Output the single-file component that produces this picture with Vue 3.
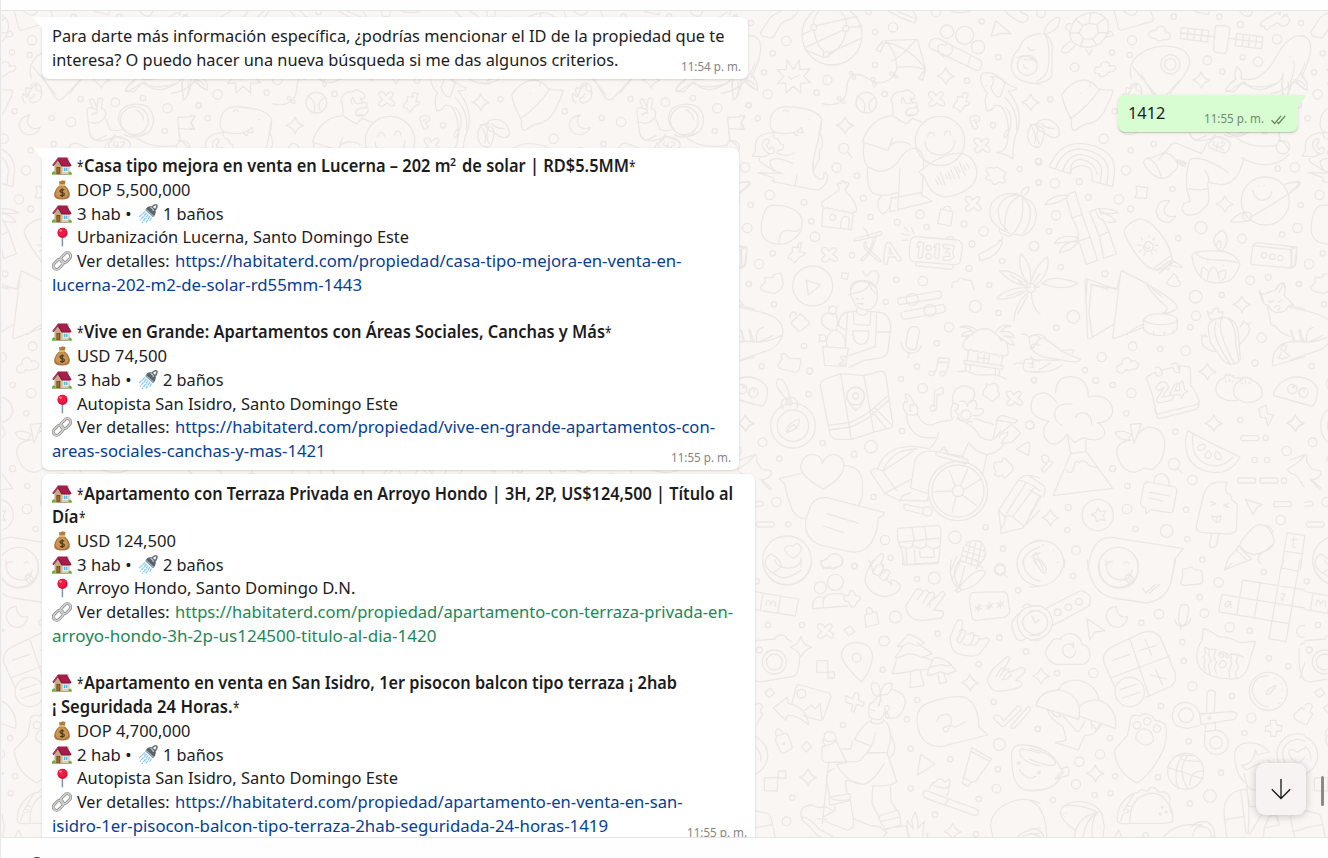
<script setup>
import { h } from 'vue'

const T = (s, w, o = {}) => ({ s, w, ...o })
const star = { s: '*', w: 6.5 }
const bold = (s, w) => ({ s, w, bold: true })
const icon = (name, gap = 5) => ({ icon: name, gap })

const listing = (title, price, rooms, baths, place, placeW, link, blank) => [
  ...title,
  [icon('bag'), T(price[0], price[1])],
  [icon('house'), T(rooms + ' hab •', 54.5), { ...icon('shower', 5), lead: 6 }, T(baths + ' baños', 60.5)],
  [icon('pin'), T(place, placeW)],
  [icon('chain'), T('Ver detalles:', 92.5), T(link[0], link[1], { link: link[4] || 'blue', lead: 5 })],
  [T(link[2], link[3], { link: link[4] || 'blue' })],
  ...(blank ? [[]] : [])
]

const bubbles = [
  {
    cls: 'first', time: '11:54 p. m.',
    lines: [
      [T('Para darte más información específica, ¿podrías mencionar el ID de la propiedad que te', 672.5)],
      [T('interesa? O puedo hacer una nueva búsqueda si me das algunos criterios.', 566.5)]
    ]
  },
  {
    cls: 'second', time: '11:55 p. m.',
    lines: [
      ...listing(
        [[icon('house'), star, bold('Casa tipo mejora en venta en Lucerna – 202 m', 366.5), { s: '2', w: 6, bold: true, sup: true }, { ...bold('de solar | RD$5.5MM', 167), lead: 5.5 }, star]],
        ['DOP 5,500,000', 113.5], 3, 1, 'Urbanización Lucerna, Santo Domingo Este', 332,
        ['https://habitaterd.com/propiedad/casa-tipo-mejora-en-venta-en-', 506.5, 'lucerna-202-m2-de-solar-rd55mm-1443', 310], true),
      ...listing(
        [[icon('house'), star, bold('Vive en Grande: Apartamentos con Áreas Sociales, Canchas y Más', 521), star]],
        ['USD 74,500', 90], 3, 2, 'Autopista San Isidro, Santo Domingo Este', 321,
        ['https://habitaterd.com/propiedad/vive-en-grande-apartamentos-con-', 540, 'areas-sociales-canchas-y-mas-1421', 273.5])
    ]
  },
  {
    cls: 'third', time: '11:55 p. m.',
    lines: [
      ...listing(
        [[icon('house'), star, bold('Apartamento con Terraza Privada en Arroyo Hondo | 3H, 2P, US$124,500 | Título al', 649)],
          [bold('Día', 26.5), star]],
        ['USD 124,500', 99], 3, 2, 'Arroyo Hondo, Santo Domingo D.N.', 278.5,
        ['https://habitaterd.com/propiedad/apartamento-con-terraza-privada-en-', 558, 'arroyo-hondo-3h-2p-us124500-titulo-al-dia-1420', 384.5, 'green'], true),
      ...listing(
        [[icon('house'), star, bold('Apartamento en venta en San Isidro, 1er pisocon balcon tipo terraza ¡ 2hab', 593)],
          [bold('¡ Seguridada 24 Horas.', 180.5), star]],
        ['DOP 4,700,000', 113.5], 2, 1, 'Autopista San Isidro, Santo Domingo Este', 321,
        ['https://habitaterd.com/propiedad/apartamento-en-venta-en-san-', 507.5, 'isidro-1er-pisocon-balcon-tipo-terraza-2hab-seguridada-24-horas-1419', 556])
    ]
  }
]

const FitText = ({ seg }) =>
  h('svg', { width: seg.w, height: 23, overflow: 'visible', style: { display: 'block', flex: 'none', marginLeft: (seg.link ? 0 : seg.lead || 0) + 'px' } }, [
    h('text', {
      y: seg.sup ? 10.5 : 17, textLength: seg.w, lengthAdjust: 'spacingAndGlyphs', fill: 'currentColor',
      'font-weight': seg.bold ? 600 : 400, 'font-size': seg.sup ? 11 : undefined
    }, seg.s)
  ])

/* Wallpaper doodles, drawn on sheets at three units per pixel */
const sheets = [
  {
    x: 1100, y: 0,
    dots: [242,297,8,346,307,13,429,294,8,502,325,14,596,316,8,155,354,8,213,366,14,494,393,8,403,362,42],
    sparks: [],
    crosses: [],
    paths: [
      'M125 225L164 291Q175 306 189 295L240 240M376 270Q390 250 403 244M376 270Q392 276 403 263L432 246Q470 290 531 249M545 248L550 300Q570 290 564 246M582 240Q612 240 622 272Q602 262 590 249M77 309Q62 300 70 280L82 292Q91 260 112 250Q100 275 122 273Q133 300 99 309Q84 307 91 293Q101 296 103 282M90 345Q57 350 58 379Q65 405 91 404Q115 400 121 382Q91 394 82 367Q80 354 90 345',
      'M263 350Q256 323 270 322L280 326L270 305Q271 294 280 298L291 323L294 300Q300 289 308 298L304 326Q318 325 317 345Q310 366 285 370L265 366ZM280 326Q296 323 291 340Q280 336 276 347M264 366L269 399Q270 416 291 421L318 407M317 356L330 388Q348 395 365 389M375 391Q340 362 367 326Q400 303 441 319Q474 350 452 390Q425 418 389 403M408 329Q430 340 431 360M334 425L346 409Q380 410 391 430M533 352Q560 354 585 346L572 370L584 389L539 386M533 352L539 425'
    ]
  },
  {
    x: 740, y: 0,
    dots: [139,123,14,98,160,8,72,217,8,83,283,14,26,316,8,53,355,8,230,278,8,262,240,14,405,96,8,459,82,14,386,36,8,405,195,8,434,282,8,588,38,13,725,64,8,775,172,8,681,242,8,759,376,8,839,507,8,15,502,14,89,585,14,32,615,8,192,607,9,290,503,14,351,527,8,370,595,9,214,664,8,225,710,14,22,684,14,98,760,8,57,792,14,26,852,8,392,651,8,472,667,9,540,643,13,560,681,8,672,672,9,731,694,14,696,732,9,882,738,14,336,766,8,469,839,8,549,843,14,687,805,9,748,855,8,786,783,8,896,485,10,896,548,8,33,69,8,276,105,90,221,82,9,318,85,9,259,163,9,379,308,31,621,95,20,674,106,27,714,141,20,600,423,74,311,445,15,278,652,9,218,858,60,566,744,8,566,769,8,872,863,14,862,196,30],
    sparks: [315,376,617,228,872,307],
    crosses: [589,297,726,436,699,611,268,764],
    paths: [
      'M122 34L107 42Q92 48 84 63L62 97Q62 105 70 109L92 114Q100 113 105 103L121 75Q127 66 139 62Q163 55 174 34',
      'M188 104L212 92M230 77L352 49M194 143L308 91M327 82L366 78M199 151L250 172M269 158L364 115M236 34Q215 60 222 73M222 91Q226 129 252 155M300 34Q322 50 319 76M317 94Q312 140 267 164',
      'M160 208L178 180L180 209L210 207L191 229L212 248L181 250L182 279L160 259L138 279L137 249L112 251L131 229L111 209L139 209L141 180ZM145 229L153 237L178 225',
      'M435 122L525 118Q531 117 534 124L557 208Q515 195 470 202Q470 153 435 122ZM529 119Q475 178 455 182M435 125Q515 145 556 208M428 123L408 149L421 156L433 129L453 130M557 208L534 235L548 241ZM471 202Q465 230 446 240Q420 254 401 244L372 229Q349 217 334 228Q320 240 320 270Q315 296 303 303Q280 321 247 311M330 215Q343 214 337 224Q352 230 344 239Q334 235 337 224Q323 222 330 215M396 233Q411 232 403 244Q413 258 402 260Q394 252 403 244Q387 245 396 233M450 216Q463 213 461 225Q478 225 474 233Q463 235 461 225Q444 227 450 216M292 292Q304 287 302 299Q320 302 314 311Q302 310 302 299Q288 302 292 292',
      'M447 34Q491 59 526 69Q533 48 519 34M472 34L528 57M635 34Q660 42 690 34M796 34Q820 60 848 67Q868 65 863 47L840 34M753 109L767 62L813 101L785 100ZM568 132Q573 112 596 116L720 180Q731 189 720 208Q714 214 702 208L571 145Q566 140 568 132M691 170L683 197M611 171Q591 154 593 139Q602 128 613 137Q621 128 631 132Q653 158 611 171',
      'M900 101Q850 105 837 147Q811 170 815 206Q823 250 900 252M832 173Q850 163 864 169Q872 176 887 184M852 178L861 179M867 180Q876 181 879 173M851 195Q851 207 864 205M864 142Q873 157 884 148',
      'M740 333Q730 291 743 281Q710 238 728 220Q760 210 796 247Q817 263 829 263Q829 274 804 272Q850 331 834 389Q817 420 819 477Q790 458 770 458Q794 456 801 432Q814 374 789 324Q775 311 763 317Q762 330 740 333ZM752 262Q768 239 754 230Q783 231 795 250L781 290Q767 297 752 262M795 292Q837 336 829 389M797 323Q829 358 797 413Q785 412 801 389M739 257L740 257',
      'M90 371Q94 313 152 321Q230 326 245 357Q245 382 240 398Q254 432 243 445Q234 454 239 462L238 478L230 491L220 513Q210 505 235 420L243 366M130 334Q140 326 145 336M207 358L209 358M90 371Q91 394 108 397Q162 409 185 382L189 399L174 396Q172 416 162 400M101 397Q38 401 47 451L37 469L57 469Q79 473 91 461M101 397Q97 418 115 417Q117 433 130 434L129 449Q110 448 111 460L136 466Q152 466 164 458M80 416Q63 425 69 442Q82 466 101 459L103 446L94 441L87 449L79 434L86 428Q89 415 80 416M59 474Q53 483 70 492L103 513L127 520L54 518L90 530Q110 534 97 544L162 558Q170 547 170 525M163 557Q211 569 235 569Q263 557 263 527Q258 513 252 519Q253 545 235 535Q215 526 221 490M106 513Q89 501 91 482Q108 467 158 490',
      'M351 288Q382 301 372 337M407 292Q378 304 391 332M324 457L335 471M458 347Q462 318 453 302Q457 274 487 275Q500 264 515 277Q529 286 522 297L510 295L519 307L499 312L488 292Q481 300 486 312M517 309Q534 305 532 313L528 320Q542 328 526 345Q500 354 497 340Q497 323 528 324M497 335Q495 343 503 345L521 344M461 348Q483 365 500 371L517 355L545 366M458 347Q419 349 393 378Q376 398 367 426L444 451L458 413M372 427Q365 490 389 503Q434 530 472 488Q502 435 534 448Q554 460 551 508M445 449Q450 428 473 426Q500 423 511 436M383 503Q379 569 402 581Q437 593 472 577M480 504L473 631M455 589Q449 620 450 635L575 604Q558 590 544 586L545 577L454 595M549 525L546 577M424 589Q412 594 414 622Q420 640 430 641Q446 632 450 617',
      'M563 410Q567 395 574 397Q583 398 583 409M613 405Q616 392 625 393Q633 395 632 405M555 425Q557 463 603 465Q643 460 645 421M537 516Q610 454 669 461Q707 472 711 521Q706 570 636 588Q600 598 570 567L554 534ZM552 482Q565 484 574 493M587 540L594 554M592 528L605 554M601 518L616 556M616 523L623 535M624 516L633 536M632 509L645 536M643 501L659 535M652 502L659 516M659 489L675 526M671 497L679 512M679 491L688 505',
      'M691 351Q706 343 717 350Q724 365 706 367L714 380Q711 391 701 386L689 357ZM708 359L700 362M684 281L678 304L689 307Q688 316 676 317L660 337Q657 327 639 321Q641 311 652 304L652 289L669 292Q664 280 672 278ZM185 729L178 756L196 759Q194 767 180 770L164 789Q158 778 143 774Q145 764 157 757L157 741L176 743Q171 734 177 729Z',
      'M298 570Q297 556 291 553Q294 545 303 551Q305 538 311 542L313 551Q322 543 326 550Q324 560 315 567L318 577Q340 590 350 626Q350 639 339 637Q330 645 325 634Q314 639 309 631Q296 637 291 628Q282 634 277 624Q267 631 263 622Q255 629 249 619Q239 614 250 603ZM249 624L245 679L334 689L340 640M302 683Q301 651 315 649Q329 650 328 661L325 687',
      'M63 690Q67 618 96 616Q168 613 186 656Q187 689 177 702Q151 733 117 733Q68 731 63 690M116 732Q120 684 148 692Q172 698 178 688M341 717L423 694Q429 702 420 706L342 724ZM370 685L378 691L386 711M410 705Q395 760 369 782Q358 784 369 771Q394 753 401 711M378 724L379 740L421 779Q426 787 414 783L375 747Q367 729 378 724M434 792Q426 783 438 732Q445 722 453 731L484 779Q482 786 472 782L464 770L446 772L441 794ZM449 743L447 761L457 762Z',
      'M508 766Q508 721 514 716Q523 708 537 711L654 720Q669 726 667 747L660 787Q651 796 642 794L517 784Q508 780 508 766M617 715Q635 701 644 719M527 785L528 797L635 808L640 798M486 702L508 706M494 682L504 694M514 682L522 700M486 721L502 720M531 734L535 726L551 728L547 772Q534 778 534 769L539 739L531 742ZM584 734L599 731L596 776Q583 777 583 768L588 741L582 743ZM609 734Q641 732 643 740L638 757L642 772Q630 783 613 782Q604 774 614 769L629 769L628 759L616 756L630 746L611 744Z',
      'M602 627L639 636L632 678L593 670ZM609 628Q612 618 625 619Q635 621 631 634M739 513Q738 501 749 503Q755 501 761 506Q768 497 777 505L792 514Q799 518 795 527Q785 529 795 538Q797 547 788 550Q777 541 768 553Q756 555 756 543Q748 537 739 540Q734 529 747 526Q745 518 739 513',
      'M826 581Q777 577 755 609Q739 653 770 677Q795 704 850 706Q888 690 889 640Q884 604 859 597M834 584Q783 587 774 630Q776 676 803 691M842 586Q789 610 795 691M847 591Q856 660 821 698M856 599Q888 638 852 698M821 587Q835 582 846 589Q855 594 858 602M822 586Q820 582 828 581L847 588M778 686Q776 699 789 702Q809 712 815 706M844 579Q846 565 867 560Q869 580 848 589M788 711Q786 730 718 762L719 782Q770 773 785 733M775 723Q783 715 787 729',
      'M864 851Q828 800 844 761Q876 797 872 844M854 855Q820 856 779 813Q820 807 862 850M810 825L848 847M900 820L882 846M900 859L886 863M199 840L241 854Q230 867 205 885ZM61 861Q80 848 75 832L93 833Q105 831 99 824L123 819L130 854Q125 870 105 880Q60 875 61 861M306 818L325 820L322 839L304 834ZM369 815L380 828Q409 796 417 828L410 854M332 870Q350 823 410 862M636 864Q633 843 651 844Q661 827 671 838L693 842L703 870M0 741L20 742L15 792Q10 802 0 800M5 748L5 790M0 345L15 349L4 367L14 388L0 384M0 548L29 544L24 556L0 577M31 107Q74 110 57 176Q45 210 34 231Q54 239 52 271Q34 262 20 248Q5 240 0 270M897 370Q863 370 863 410Q871 446 893 439M877 384Q893 415 883 429'
    ]
  },
  {
    x: 1030, y: 0,
    dots: [33,40,13,431,50,8,568,50,8,631,74,9,306,121,14,246,157,8,299,165,8,134,202,13,532,181,13,577,215,8,638,172,8,684,185,14,741,118,14,61,298,8,221,416,14,254,334,8,371,432,8,302,451,8,25,484,8,26,548,8,75,550,14,148,545,9,288,511,14,427,567,8,175,592,9,267,598,14,302,627,9,78,646,14,57,694,8,12,738,14,445,715,8,513,683,18,636,716,13,756,704,8,743,506,8,92,802,8,225,821,9,661,841,13,715,832,9,702,766,8,727,770,8,751,774,8,421,193,29,421,193,17,706,603,72,651,650,13,759,442,20],
    sparks: [513,240,584,612],
    crosses: [],
    paths: [
      'M123 84Q136 42 189 38Q218 39 233 63Q243 99 213 128Q171 156 128 127Q115 107 123 84M178 70L200 74L206 97L188 117L160 116L147 98L158 77ZM178 70L182 40M200 74L225 54M206 97L236 99M188 117L201 136M160 116L151 138M147 98L120 100M158 77L136 57M122 71Q104 70 108 85L121 98M121 124Q97 137 94 154Q101 164 117 155L135 137M234 92Q254 97 248 108L225 112M168 148L177 165L187 149M43 103Q41 74 79 52Q97 49 83 80Q70 98 43 103M38 100Q59 106 67 136L65 227Q54 250 0 250M47 105Q60 139 56 184Q56 230 22 242',
      'M253 34L266 85Q268 93 276 90L364 65Q373 61 370 53L361 34M282 34Q310 57 322 34M493 34L536 44L539 34M630 34Q643 53 661 47L668 34M751 34L750 45Q744 33 733 42L697 64Q687 73 694 79L704 78Q702 91 715 88L722 80L744 67Q760 89 776 69Q785 50 760 44M755 53L773 41M359 108Q352 97 365 91Q379 96 382 83Q397 73 405 84L405 96Q420 94 421 107Q421 122 400 119L390 123Q378 121 377 115Q365 119 359 108M196 220Q188 208 202 200Q212 203 213 192Q221 181 234 187Q241 192 237 200Q254 192 258 203Q253 218 237 216Q218 237 207 227Q218 221 196 220',
      'M454 83L536 91L533 126L451 116ZM474 85L471 119M495 87L491 121M516 89L512 123M453 99L534 108M536 108L555 110M597 115L618 117M620 101L699 110L695 146L616 137ZM640 104L636 139M659 106L655 142M680 108L676 144M618 118L697 127M563 76L589 78Q600 80 599 90L590 154Q586 161 578 160L557 157Q550 154 551 145L555 85Q556 77 563 76',
      'M300 213Q301 178 338 157Q385 128 446 144Q481 158 479 190Q468 226 436 260L420 280M308 200L378 285M300 213L304 236M294 286Q282 277 290 262L299 266Q305 246 321 250Q334 252 336 280M160 240Q125 242 96 283Q95 304 125 361Q121 393 136 391Q159 372 184 369Q216 358 232 314Q248 288 248 270Q215 272 203 264Q189 242 160 240M151 280L152 280M210 266Q177 319 121 356M182 249Q177 253 180 258M19 375Q26 352 60 360Q90 373 88 405Q72 424 40 396Q17 390 19 375M35 370Q43 385 72 386M0 374Q45 376 42 401Q36 448 16 443M26 383Q14 411 28 431',
      'M587 274Q594 247 618 238Q610 223 621 200Q640 216 632 236Q651 241 676 236Q713 219 740 168Q775 102 820 107Q849 117 838 158Q820 209 801 237Q766 276 724 280M587 274L612 275L636 249Q680 271 739 251Q758 238 760 220M780 171L781 171M790 184Q799 200 783 242L774 285M759 236Q753 271 760 286M814 221Q832 237 832 270Q815 263 800 247',
      'M58 501Q85 430 151 430Q252 440 254 510L248 560L186 543Q192 494 153 497Q121 503 120 521ZM77 506Q97 446 153 447Q231 460 235 511L231 554M98 513Q115 463 154 463Q215 475 215 514L211 550M123 520Q118 479 154 478Q192 485 203 523',
      'M45 613Q66 583 117 586Q84 616 45 613M116 582L135 574L156 643L126 654L106 583M126 654Q150 690 144 724L180 711L156 643M147 725L169 793L203 781L180 711M74 730Q86 702 140 711L144 721Q100 725 87 758M144 724Q104 725 74 730M87 758Q120 755 147 726M178 636L207 624L213 643M180 640L208 709L236 694L217 656M208 709L221 775L259 762L236 694M207 628Q235 621 265 638Q230 644 216 636ZM216 640Q246 644 258 666Q224 671 206 653L197 632',
      'M479 399Q487 425 515 422Q545 421 556 404M583 404Q614 421 643 400M546 415Q551 409 562 411L593 422Q603 429 600 437L594 452Q586 462 578 458L541 445Q533 437 536 431ZM554 425Q546 437 555 437L566 440M564 427L560 447M572 427Q589 423 581 435L569 444L581 450M439 480Q466 483 468 493L444 485L458 499M531 429L515 461L438 429Q420 431 418 442L384 480M340 487Q347 469 365 474L399 459Q417 454 438 482Q452 500 428 518Q404 544 381 531Q351 515 340 487M347 475Q374 473 395 531M440 483L466 500M525 511Q543 538 533 552L537 597Q536 619 516 628Q509 647 471 645Q447 631 463 609L481 604L470 567Q466 518 480 478Q520 464 595 518M470 565Q510 574 534 565M534 545Q620 580 642 472M621 415Q665 448 740 436M634 474Q672 493 700 494Q748 495 776 464M744 421Q762 420 777 449M748 398L750 418',
      'M318 558L353 563L349 596L315 592L322 577ZM419 602Q385 596 378 634Q384 668 415 667Q431 661 437 648Q401 657 403 624ZM645 635Q610 649 601 666Q624 670 655 662M662 651Q811 566 811 550Q801 541 764 553M669 571Q670 592 693 601Q722 600 725 575M686 559L687 559M702 556L703 556M282 696Q286 672 323 658Q346 655 369 676Q420 725 427 781Q418 801 383 811Q350 809 319 764Q289 721 282 696M374 803L422 767M380 810L428 778M388 819L433 784M427 781L457 799L456 803L420 796M405 805Q420 815 418 804M360 742Q355 750 345 741Q343 724 357 724Q378 735 365 751Q344 762 339 737M357 706L357 712M374 714L369 720M385 736L376 736M380 754L373 750M366 763L365 757M342 766L345 759M327 755L335 750M323 735L332 736M333 713L338 720',
      'M486 768Q486 750 564 753Q617 756 630 793Q617 834 593 844Q555 854 526 842Q490 817 486 768M498 758Q511 781 560 780Q610 782 622 788M573 755Q552 739 552 719Q556 700 577 691Q591 700 592 722Q588 741 573 755M560 738Q557 731 568 721Q579 732 569 747M514 832Q512 807 519 801Q533 808 538 822M532 838Q536 808 550 800Q568 815 568 841M563 823Q569 810 587 811Q590 832 574 842M531 784L532 784M557 779L558 779M580 796L581 796M662 788L668 741Q670 730 683 728L798 741Q803 745 797 793Q792 804 784 804L666 794ZM668 737L782 749L802 741M782 749L784 801',
      'M0 860Q10 800 53 770Q63 820 12 862M36 851Q67 820 144 850Q110 875 36 851M166 835L240 861L260 868L274 812L350 850L395 890M181 852L235 868M171 838L169 885M408 850L430 821Q445 830 443 840Q460 850 445 858Q425 864 408 850M739 870Q747 850 759 848L767 870'
    ]
  },
  {
    x: 740, y: 280,
    dots: [102,73,8,192,198,8,65,259,8,209,273,9,206,343,8,40,338,14,68,487,13,118,536,8,248,489,8,343,523,9,393,500,19,109,666,14,145,733,8,400,651,8,437,66,8,627,142,14,590,190,8,531,260,8,483,297,8,548,325,14,486,453,8,706,79,18,776,99,8,882,300,8,737,742,8,645,772,19,789,806,8,435,780,14,452,834,8,343,858,8,159,437,67,159,437,47,147,367,9,347,348,27,347,348,9,654,633,89,654,633,78,654,633,17,563,694,14,517,58,18,570,91,18,678,405,15,141,841,73,780,866,16,278,91,12,248,174,10,27,12,8],
    sparks: [16,429],
    crosses: [823,355],
    paths: [
      'M0 82Q85 99 107 114Q130 133 129 159Q122 195 88 210L0 240M0 184L60 186Q95 182 124 167M50 184Q44 148 70 142M98 167Q80 177 60 184M27 149L34 184M5 152L13 183M0 293Q62 285 82 325Q84 364 67 379L0 361M0 540L38 526Q52 518 50 534L50 545L65 567L87 571Q98 573 92 584Q85 597 65 600L93 623Q96 628 89 629L60 597M45 667Q70 660 70 672Q70 680 45 679M53 726L98 726Q104 730 104 734Q102 741 96 741L54 741Q48 738 49 732Z',
      'M126 236L123 223Q133 218 139 224Q141 232 153 235L178 236Q186 242 181 251L177 270Q172 279 162 276L124 267Q111 262 117 251ZM151 113Q149 97 159 96Q168 97 170 105M181 102L207 125Q211 129 203 136L182 153Q175 155 170 148L155 133Q153 127 161 120ZM147 353Q125 355 124 371L129 385M147 353Q165 349 173 369L171 384M147 368L119 333Q105 315 112 300Q122 292 131 304Q142 319 147 340L151 365M178 417Q154 425 142 441Q139 449 141 458Q164 451 175 437ZM142 456L153 438L164 434L171 445',
      'M334 50Q324 10 350 4Q400 -9 412 34Q416 75 391 88Q369 93 347 77L334 50M326 44L337 41Q384 33 387 10Q396 36 411 41M348 56L356 57M351 71L369 70L366 74M364 57L371 55M350 86L350 97Q366 114 381 100L381 88M350 93L324 96Q298 98 295 137L317 150M381 94L410 96Q449 98 452 140L444 212Q440 230 420 234L370 242L327 263M410 96L406 200L312 232M408 156L453 156M323 97L316 197M340 98L342 133L390 136L392 99M338 152L386 153Q389 190 364 193Q337 190 338 152M317 230Q297 225 303 235L312 240L297 252Q314 259 311 248M248 200L325 205Q318 244 318 259L254 256ZM260 199Q258 155 285 150Q317 158 317 204M272 150Q238 137 246 112Q258 91 289 105Q296 121 289 150M271 84L267 78M278 80L277 76M288 84L293 79M242 166L237 164M240 182L235 186',
      'M242 323Q237 306 256 297L302 281L372 287L417 274Q433 271 438 290L458 431Q459 442 448 445L407 455L334 478L286 478Q272 473 269 458ZM302 281L334 478M372 287L401 455M265 436L328 428Q365 412 387 396L444 347M267 450L332 441Q372 423 393 407L447 360M394 391L438 444M405 384L453 433M347 392Q320 364 320 349Q322 324 347 322Q373 325 373 350Q372 370 347 392',
      'M474 55L595 33Q606 33 604 47Q603 55 592 56L480 74Q471 72 474 55M484 98Q480 110 492 118L608 98Q617 95 616 83L609 73L492 95M517 140Q538 137 538 154L529 204Q520 214 506 206Q496 199 498 188L504 154Q507 143 517 140M483 184Q486 215 512 220Q537 219 544 196M508 222L504 235M587 275L596 234L629 235L619 276M594 246L625 247M583 333L582 380M583 333L608 321L610 339L594 346M592 340L589 384Q587 392 577 394Q567 391 570 381Q577 374 588 376M567 283Q565 272 578 275Q590 279 580 286Q567 288 567 283M600 284Q599 273 612 275Q621 281 612 287Q603 290 600 284',
      'M669 198Q663 184 710 153Q740 138 757 154Q775 171 795 183Q806 192 804 223Q799 231 785 226Q774 231 768 222Q756 226 749 219Q738 223 732 215Q719 220 711 212Q699 217 693 208Q675 216 669 198M685 211L682 241M672 241L789 257L787 268L674 252ZM789 228L783 257M715 221L712 244M748 225L746 249M733 222L731 248M716 234L748 236M677 257L677 272M690 258L692 270M766 267L766 282M779 267L778 284M654 275L680 273L706 284Q725 286 751 284Q775 284 798 297M712 152Q683 131 660 141Q685 141 696 153M700 155Q664 151 666 170Q682 165 694 165M696 165Q678 168 677 180M768 157Q779 130 813 138Q789 141 782 155Q817 151 822 173Q810 168 790 168Q817 173 822 197Q796 188 787 175M777 170Q786 190 787 178',
      'M770 55Q800 21 870 23M775 57Q820 60 862 30M822 122Q825 69 866 36M874 38Q875 80 900 103M801 48L849 33M833 101L863 47M836 2Q843 14 862 20M845 163Q860 160 869 176Q866 199 880 205L884 190Q892 199 900 194M869 172Q892 157 900 176M822 253Q835 245 853 252Q849 238 863 237Q877 236 900 244M852 252Q844 266 860 275L900 276M865 250L875 252L882 247',
      'M501 402Q483 381 494 366L503 367Q490 339 501 341Q510 344 520 367Q538 380 532 401Q520 410 501 402M507 377Q520 369 522 378M512 378Q507 397 514 393M500 405Q500 447 539 469Q558 475 585 473M533 405Q550 441 580 434Q594 423 634 421M596 457Q590 487 567 508M637 417Q627 394 639 370Q633 338 653 324Q675 309 700 328Q710 345 694 368M641 371Q660 370 654 386L644 392L657 405L651 418M659 364Q682 359 682 379Q687 358 706 362Q715 373 706 387Q733 381 730 397Q718 413 698 405M655 414Q670 432 697 424M705 415Q737 427 752 430L760 434M680 430Q703 440 718 467Q730 482 756 480Q776 467 782 450M686 488Q703 515 740 524Q773 520 794 490M686 488L666 530M741 524L727 586M760 472L774 412M768 420L825 430L832 420L788 407Q779 406 776 414M815 433L842 459L815 487L783 490L796 471Q805 467 803 456Q780 463 777 472M812 435L782 460',
      'M390 573Q403 563 413 567Q421 540 442 522Q487 487 563 506M429 572Q446 530 480 516Q500 508 530 507M429 573L520 513M391 575L434 640L513 598M413 567L428 573L470 632M512 622L525 540Q539 510 586 514L670 530M512 624L562 640M434 640L474 660Q492 661 562 663L565 650M480 664L485 649L512 638M494 673Q488 682 497 690L551 703M493 673L550 684M590 514Q585 522 590 527L676 551Q688 549 684 539L597 516M600 514L606 507L623 514L622 520M604 508L613 500L620 512M637 633L583 635M646 617L628 572M662 616L683 566M671 629L724 596M667 645L709 676M648 650L636 698',
      'M250 627Q180 588 182 558Q194 512 234 528Q246 535 247 551Q255 525 282 523Q315 530 311 562Q308 594 250 627M187 579L118 595L135 614Q140 650 158 691Q172 715 196 716M310 556Q371 559 367 620Q369 655 356 674M208 688Q218 650 260 653L433 697Q437 701 415 715Q410 780 376 807Q350 822 320 813L240 795Q185 772 200 710ZM259 700L356 730M250 738L311 758M93 822Q130 843 123 862L97 880Q72 860 76 841Q80 829 93 822M158 835Q127 813 136 803Q148 792 157 799Q173 781 184 804Q183 824 158 835M183 835L183 861M100 878Q130 912 183 870',
      'M829 507L862 487Q870 487 869 500L865 526ZM870 421L881 429L882 441L871 449L858 442L856 430ZM762 548L787 545Q785 530 797 537L817 558Q823 566 815 575L793 595L787 585Q777 593 763 584Q773 574 763 567Q760 557 762 548M741 311L750 317Q753 308 768 311Q779 321 772 333Q782 341 776 349L757 365L729 344Q726 334 739 322ZM852 587Q873 583 900 594M851 587L835 600L776 690L784 760L848 744L900 690M835 600Q870 607 900 633M777 691L795 711Q805 700 823 715L852 739M795 712Q795 740 780 744M800 700L857 610M820 708L885 619M854 738L900 645',
      'M473 745L597 736Q605 744 602 775L600 800Q598 841 592 850L495 855L484 809L473 780ZM516 743L522 779L516 800Q499 812 477 795M554 741L559 775L558 798Q540 814 520 796M475 787L601 774M559 796Q580 815 600 797M497 809L501 853M523 807L526 852M539 814L541 833L583 831L580 807M250 866L241 845Q260 839 271 825Q294 815 304 832Q313 840 308 850Q305 864 250 866',
      'M679 789Q700 777 721 785Q741 800 734 834L708 866M671 800L660 845L636 900M675 794L736 814M667 811L732 831M665 826L725 847M662 842L718 861M691 787L677 848M708 785L692 858M725 790L710 865M651 829L630 875M900 779Q840 795 832 840Q830 860 838 878M900 800Q850 820 849 850M900 818L875 830L895 840M386 866Q405 835 425 820Q438 823 422 850Q431 848 430 862'
    ]
  },
  {
    x: 1030, y: 280,
    dots: [497,50,19,575,45,8,130,110,19,79,143,8,498,107,14,481,142,8,695,173,14,675,249,9,308,199,13,391,207,8,467,212,14,215,231,14,165,270,8,197,301,9,248,315,8,304,339,14,12,301,8,289,400,8,436,455,8,631,420,8,707,474,8,770,513,14,674,540,8,711,540,8,487,600,14,432,552,17,248,566,9,292,618,8,291,687,14,468,689,8,317,747,8,410,753,19,115,682,9,112,750,8,138,811,13,472,778,8,517,839,8,752,720,14,762,602,8,203,705,47,265,862,60,787,327,14,822,339,14,791,321,3,824,333,3],
    sparks: [635,73,532,275,551,430,796,430,61,713],
    crosses: [],
    paths: [
      'M165 0L173 176Q180 178 185 173L251 133M184 15L177 100L187 172M184 15L266 27M271 -15L248 171Q250 178 258 174L340 142M290 165Q310 145 340 132M350 12Q425 54 442 78Q444 90 414 99L397 99M350 13Q370 49 408 78Q417 86 403 98M340 120Q352 100 390 101Q440 104 442 119L442 147Q430 167 391 167Q350 164 341 148ZM342 121Q360 135 391 134Q430 134 442 121M371 155L371 165M403 155L403 166M430 150L429 160',
      'M0 168Q34 156 47 175Q30 171 21 184L20 193Q8 188 0 206M47 178Q66 189 94 213Q120 206 131 210L128 221M94 213L151 238Q150 248 118 244L42 231Q14 221 3 205M0 230L11 236L6 250L10 263L0 262M12 239L86 241M28 269L62 249M0 276Q70 280 97 254',
      'M535 150Q530 118 580 112Q624 116 625 164L631 236Q628 252 599 253Q578 245 568 225L541 188ZM558 126Q540 165 600 251M577 113Q554 140 613 251M597 117Q620 145 617 191L626 240M532 94L544 102Q551 80 565 85L566 98L579 94Q580 108 570 115L540 118ZM630 141Q643 116 655 136Q668 157 629 193M532 171Q515 160 515 177Q512 203 551 215L558 213M519 172L514 165M527 168L525 161M644 128L640 123M655 133L661 129',
      'M687 30Q691 42 704 43Q717 35 734 32Q747 9 762 8Q769 24 762 46L790 74L774 80Q768 96 742 98Q725 97 716 77L702 72Q694 59 687 30M692 36L701 65M761 11Q750 30 747 37M716 64Q725 68 729 63M746 67L755 61M735 83Q736 75 748 78Q754 84 744 91M712 79L723 132L738 140Q750 160 781 170M780 76Q860 94 890 116M727 258Q728 215 742 207Q756 180 830 184L890 183M727 258L860 220L892 205M753 205Q758 190 770 197L765 215Q750 210 753 205M754 219L745 235L760 237L780 228L765 217M782 149L791 183M810 148L820 183M830 183Q825 148 852 142',
      'M262 273Q255 260 271 254L277 251Q273 235 292 233Q302 234 303 246Q314 236 326 252Q327 270 306 268Q298 275 287 269Q279 285 262 276ZM348 292L376 276L379 286Q392 292 397 281L395 270L428 262Q433 280 445 278Q452 270 447 257L475 260Q481 262 481 275L482 320M348 292Q366 338 369 354L381 408Q379 415 392 415L498 388Q508 382 508 366L500 343Q493 328 482 317M374 385Q376 405 384 402L499 374Q508 371 507 360M376 264Q383 258 389 262L396 280M425 253Q438 245 442 254L450 278M377 322L392 306Q413 303 416 323L396 352L425 345Q437 354 421 362L384 369Q375 363 384 351L402 323L385 333ZM434 314Q421 335 419 347L449 343L455 356L463 339L474 334L464 330L458 302L448 310L449 331L435 333L443 309Z',
      'M560 340Q550 304 585 293L587 283L594 288L599 283L605 288L612 286L609 293L638 296M560 340Q578 367 622 361M612 345Q606 310 637 299L638 291L646 296L649 290L656 296L663 294L662 299Q698 310 697 345Q686 368 650 368Q622 362 612 345M586 302L589 307M598 298L599 304M608 303L607 306M634 307L638 312M646 303L647 310M659 307L657 310M731 337Q756 287 815 292Q864 304 863 340Q862 378 844 378L730 346ZM686 386L708 375L713 402L731 405L714 438L708 414L692 411ZM636 467L684 467Q690 475 684 482L635 482Q630 475 636 467M626 594L675 594Q680 602 675 609L626 609Q620 602 626 594M692 594L741 594Q746 602 741 609L692 609Q686 602 692 594M734 665L781 665Q787 673 781 680L734 680Q728 673 734 665M773 568L806 545L826 524Q834 529 832 545L848 563L872 571Q876 577 867 588Q846 600 830 619Q819 624 816 610L801 588L779 577Z',
      'M77 340Q77 288 125 290Q175 295 175 351Q219 341 242 370Q261 412 217 427L201 429Q221 434 225 460Q215 491 158 473L136 487Q114 474 112 462Q70 519 43 469Q34 440 58 424Q3 413 3 380Q4 337 47 339Q67 348 82 370M95 436Q72 425 74 395Q83 367 126 373M136 412Q145 395 168 400Q186 409 185 433M112 462L122 521L69 647L248 625L169 515L167 482M122 521L169 515M108 571Q115 580 125 576Q134 560 134 550Q140 539 146 549Q159 533 178 557L202 564M34 529Q42 521 53 529Q60 534 54 542L70 547L42 577L34 570L52 548Q36 552 34 529',
      'M255 458Q272 446 304 463L294 480Q266 480 255 458M312 490L301 433L335 430ZM302 480Q260 486 260 518Q271 575 315 577Q337 568 343 564Q360 571 370 567Q406 540 404 488Q398 440 355 442Q333 450 327 459M473 452Q512 475 630 531Q605 575 565 577Q500 580 474 530Q459 485 473 452M489 460Q481 525 517 546Q568 575 610 531M503 502Q508 492 522 493Q530 497 523 505Q507 521 503 502M536 512Q551 526 537 535Q523 536 525 524ZM558 514Q570 518 575 532Q572 544 558 536Q550 526 558 514M444 566L455 577M372 605Q373 584 392 581Q416 581 418 615M356 606L429 620Q441 620 440 636L429 694Q424 699 415 698L362 689L347 701L347 684Q331 678 332 667L342 612Q346 606 356 606M359 637L418 648M356 654L398 663',
      'M204 684L211 696L227 692L220 707L226 722L211 718L200 726L196 710L183 704L197 698ZM499 737L521 644Q534 598 592 607Q581 625 592 640Q607 643 604 658L622 673L619 752Q608 762 590 762L512 757Q497 752 499 737M542 665L556 670L543 677M595 670L581 677L596 682M545 707Q557 714 573 707L571 722Q563 732 553 723Q544 715 549 710M561 709L560 722M545 760L538 794Q540 804 550 802Q557 800 560 794L566 763M646 658L697 674L681 682L669 704ZM174 870Q183 769 246 772L460 806L432 840Q437 860 425 890M629 796Q632 780 669 743Q691 725 714 743Q738 776 731 792Q720 815 675 823Q646 823 629 796M705 737Q717 734 728 753L725 763M731 792L688 826M688 825Q680 845 694 851M624 797L664 837L653 843L618 809ZM620 808L594 836L584 870L622 854L650 843M584 870L606 850M771 759L824 767L811 870M771 759L754 870M766 814L817 822M791 771L789 802L797 804M784 780L801 778M0 589L43 619Q47 632 40 651M0 630L33 650L0 707M0 790Q60 765 93 815Q105 840 102 862M40 870L18 817L8 826L22 855M38 795L39 795M69 811L70 811M83 846L84 846M0 423Q12 425 12 436Q12 447 0 447M247 846L235 846L229 855M295 850Q290 840 282 850'
    ]
  },
  {
    x: 740, y: 560,
    dots: [343,19,8,531,57,8,583,54,18,84,195,8,186,195,8,466,171,18,593,221,8,778,233,8,834,91,8,716,313,8,858,275,8,428,329,8,532,420,8,500,478,8,761,426,8,309,495,8,512,566,8,631,598,8,774,628,8,778,553,18,769,686,13,512,685,8,716,717,8,585,764,8,708,823,8,157,713,8,140,784,13,50,64,8,893,507,8,241,83,18,286,67,24,103,306,36,103,306,24,58,270,9,350,293,13,780,31,16,184,401,13,131,551,3,836,610,4,897,637,4],
    sparks: [204,652,638,815,690,368],
    crosses: [256,213],
    paths: [
      'M45 95L176 117L166 168L45 149M69 99L61 151M122 108L113 160M78 136L81 121Q90 117 91 135Q100 114 107 128L106 138M219 146Q213 119 236 110L250 113Q270 95 312 103M219 146L323 138M250 140Q247 119 255 112M330 92Q343 89 346 106L360 109Q365 121 352 124L347 136Q338 147 329 135L327 125Q310 125 311 112Q314 105 326 106ZM374 165L410 155L416 192L377 201ZM381 162Q375 143 388 142Q398 147 399 158M313 208L331 198L344 216L325 227ZM422 230L442 229L450 244L440 257L422 257L416 243ZM231 302L263 302L264 337L230 337ZM264 337L283 335L283 354L263 354ZM74 397L92 384L104 400L86 413ZM365 366Q309 316 304 284Q311 247 351 247Q395 250 398 290Q394 328 365 366',
      'M45 242L105 237Q110 225 122 226Q136 223 141 237Q151 241 155 245M179 290Q177 345 159 349L62 366L45 362M183 229Q187 253 214 262Q190 271 183 291Q175 270 151 262Q176 253 183 229M155 431L169 381Q171 372 180 375L267 399Q275 404 272 414L250 475Q246 483 238 481L190 467M195 451L215 435L225 448L240 430L246 480M100 444L142 412L145 431Q200 440 206 494Q173 465 143 466L137 481ZM45 435Q63 424 67 439L60 455L68 462L49 495M317 407L338 416L345 398L356 400L356 421L373 429L369 439L350 433L342 457L334 452L338 432L318 428Z',
      'M107 525Q106 504 117 507Q126 512 130 522M110 528L137 519Q145 520 157 562Q157 567 131 580Q122 580 120 571L106 541ZM184 561L200 545L215 560L199 576ZM73 654L113 652L112 693L73 692ZM114 633L137 633L137 655L116 655ZM45 530Q85 550 83 590Q80 625 45 643M45 560Q65 575 62 603M45 752L87 762Q94 768 105 830M45 803L95 795',
      'M472 259L505 223Q517 222 554 249L532 258L506 249L488 258ZM488 260L465 293Q480 295 498 283Q520 278 546 293L577 281L532 249M470 297L457 341Q500 340 530 329Q549 331 566 327M567 323L581 294Q600 287 635 314Q622 321 606 314Q590 315 567 323L562 345Q579 346 601 335L622 343L648 332L634 316M512 338L510 383L552 377L541 334M594 343L599 371L621 366L611 342M547 290L578 302',
      'M498 137L528 90Q540 80 548 97L531 119M548 97Q558 83 567 98L548 130M568 100Q585 90 583 110L562 137M570 141L569 127Q584 116 600 101Q610 88 617 102L581 150L607 153Q616 162 604 174L550 181Q500 182 498 137M631 230L649 187Q659 172 668 185L665 215L652 235Q651 250 661 248Q680 225 676 212Q662 202 658 216M670 250Q679 260 692 253Q707 225 698 217L683 223M690 252Q706 265 717 237L716 227L700 226M716 239L740 233Q750 238 746 245L719 282Q700 295 650 280Q630 268 631 230M743 355L760 326L800 291Q812 289 807 302L790 331L801 328Q812 323 806 338L845 322Q859 325 855 335L827 361Q848 364 846 375L835 383Q780 400 760 390Q742 375 743 355M768 350L783 325Q794 320 791 332L779 350M804 335L786 360L801 357L816 342',
      'M377 70Q370 45 399 0M386 0Q398 20 399 40L414 47Q430 35 430 17M398 38L409 18Q421 7 432 25L418 53Q431 67 439 57L450 37Q442 18 431 39M440 58L456 76M455 75L453 60Q465 58 480 75Q482 103 435 110Q390 105 377 70M488 0L488 14L597 7M661 83L645 91L652 97L662 92ZM651 82Q623 48 634 0M657 83Q629 30 660 0M657 82Q710 18 738 35Q714 82 662 90M658 80L675 18M706 0L729 25M697 98L790 95Q801 97 803 107L809 156Q804 169 791 172L709 181Q697 180 695 168L688 120Q689 103 697 98M716 132L716 153M706 140L726 147M725 136L707 150M748 128L748 149M738 137L758 142M757 132L740 146M781 123L781 144M771 130L791 137M790 127L772 141M900 138Q850 133 833 170Q828 212 858 233Q880 245 900 240M847 142Q856 127 873 136M833 162L817 184Q810 200 829 235Q839 249 859 235M900 152Q855 153 847 185Q851 224 900 226M875 169L886 189L897 180M791 42L802 53',
      'M70 13Q81 68 134 75Q200 75 213 13M103 0Q115 23 140 24Q175 25 184 0M242 12Q248 28 269 20Q280 35 294 19Q308 22 305 0M831 10Q832 68 900 80M850 0Q850 50 900 64M532 489Q524 445 566 428Q630 405 671 411Q718 430 716 500L743 525L603 560Q539 560 532 489M591 486Q594 461 622 463Q639 472 632 493Q622 523 612 513Q604 503 620 499Q636 493 643 501Q650 501 676 485M763 467Q758 475 766 481L785 499L792 498L844 449Q842 435 833 438L791 483L778 467Q770 462 763 467M812 499L864 440Q876 442 868 454L824 504Q813 508 812 499M542 583L584 612L532 646ZM695 563L755 597L707 664L694 667L684 679L667 670L670 657ZM693 574L748 603M670 653L694 666',
      'M550 696Q547 709 558 715L703 766Q715 768 716 753L709 747L557 691ZM624 719L615 734M567 687L577 669Q588 669 595 656Q607 654 613 666Q625 664 627 655Q632 672 626 683Q629 700 620 706M574 675L602 682Q614 688 625 680M815 595Q811 556 841 555Q870 552 900 564M815 595Q816 670 845 686Q870 697 900 688M900 618Q840 605 838 573L845 567Q880 573 900 580M838 628Q849 652 873 655L887 649M752 800Q750 765 785 740Q840 702 900 730M752 800L758 830M833 830Q845 812 900 805M847 830Q866 820 900 820',
      'M418 402L424 424M422 404Q402 420 393 381Q393 367 404 368Q420 367 422 403Q430 360 456 371Q457 389 442 403L422 405M418 404L389 435Q381 470 395 475Q428 488 432 459L440 458Q427 445 440 436Q457 440 440 456M439 458Q430 476 448 473L442 458M458 389Q503 402 495 434Q483 478 449 475M389 431L400 427M393 450L404 452M424 405L418 434Q410 450 422 417M395 477L394 487Q409 494 427 488L431 479M392 482Q366 495 343 539L388 556M406 518Q400 565 367 594Q360 605 344 605L258 607Q244 606 245 589L247 560Q254 557 269 554L289 544L320 606L286 607M337 544L332 567L308 567M432 481Q455 498 451 540L442 577L380 579M441 577L470 664Q460 680 396 677M455 530Q476 575 450 593M290 615Q330 675 370 673Q403 664 432 611M266 608L247 790M232 776L260 778M289 614L320 607M255 555L248 543L253 532Q250 518 265 515L279 516Q290 524 286 540M255 538Q263 549 276 543L291 540M282 627Q260 631 259 658L269 710Q280 726 331 719M266 712L270 736L331 721L330 701L270 711M316 663Q340 660 366 673M316 663L320 697M398 677L396 731Q411 762 419 772M451 679L453 726L472 752M415 771L422 785L480 771L474 750L419 768M422 786L436 810L482 795L480 771M331 722L340 777Q343 810 321 810L254 783M284 740L285 752L252 770M186 779Q172 739 215 735Q238 747 255 740L277 750M185 779Q212 800 229 824L245 833M186 770Q212 775 236 807L280 830M340 776L390 796L418 800L441 818L429 830M435 807L498 797L506 830M508 830Q498 795 502 782L520 808L515 780L526 756L533 781L533 805L554 784Q548 810 548 830M558 820L564 822L561 830'
    ]
  },
  {
    x: 1030, y: 560,
    dots: [129,48,8,509,112,8,566,67,14,701,36,8,387,162,14,523,160,13,334,188,8,599,202,14,659,212,8,457,246,8,461,303,8,717,295,8,775,319,8,190,339,14,81,340,8,487,379,14,606,408,8,393,438,8,23,507,8,240,534,8,476,544,8,643,519,8,664,474,14,210,583,14,148,605,14,138,673,14,255,649,8,384,652,8,573,638,8,242,700,8,194,705,8,69,720,8,540,708,19,480,731,8,347,826,8,715,394,57,468,466,22,558,548,19,467,634,54,321,496,11,352,484,11,381,506,11,299,396,44,803,583,62,803,583,45,83,157,10,115,142,10,147,125,10,397,742,3,408,756,3,391,762,3,818,214,18],
    sparks: [33,348,196,640],
    crosses: [],
    paths: [
      'M172 0Q180 100 250 114L350 129Q420 118 428 40L437 0M208 0Q202 65 250 82Q315 92 325 34L323 0M228 0Q225 55 270 60Q300 64 307 30M291 44Q282 52 288 60L299 71Q313 66 309 54L296 40Q300 50 291 44M299 57L305 65M337 85L348 98L375 74M358 100L389 73M457 28L458 47L453 70Q453 76 462 76L511 72Q520 68 518 59L515 36Q512 29 501 31L488 24Q480 18 473 26ZM0 80Q90 85 104 0M10 0L35 35Q47 48 49 26L33 0M0 138Q60 130 68 188Q60 240 0 240M0 153Q51 148 53 188Q49 225 0 226M8 170L16 190L24 180M42 148L150 93Q160 90 180 107Q184 120 177 138L68 197',
      'M259 139Q225 143 230 176Q240 205 267 202Q291 193 293 170Q261 177 259 139ZM171 176L225 212L195 216L179 240ZM461 133Q479 134 476 153L470 184Q464 200 451 194Q445 189 446 178L448 150Q450 134 461 133M434 178Q437 197 457 199Q477 196 482 176M452 199L451 208M56 298Q38 280 53 261Q65 248 68 240Q81 233 91 238Q101 220 124 221Q150 226 157 254Q182 258 179 293Q170 312 159 313L77 313Q65 310 56 298M129 253Q106 247 98 265Q97 290 118 293Q136 290 137 272M120 251L131 263L130 248',
      'M222 309Q214 278 247 260L337 218Q370 207 391 231L436 340Q440 365 425 378L347 412M222 309L255 382M299 236L358 410M241 354L419 288M247 301L299 283M345 238L365 285M330 271L378 257M376 327L397 374M362 345L411 357M270 389L321 372M277 414L329 397M18 437Q30 390 91 390Q150 405 149 460L146 478ZM84 390Q100 355 150 361Q200 377 206 418M148 440Q187 404 230 432Q265 465 256 505L146 468M51 446Q60 480 97 498Q107 520 108 541L76 548L145 570Q155 546 163 528L170 525Q192 530 214 493M98 467L133 505Q144 525 156 500L166 483M64 455Q75 475 92 469L86 461M182 486L197 507Q205 505 210 490M184 484Q182 497 186 505',
      'M520 206Q530 205 566 230Q597 230 630 248L677 244L659 302Q650 365 590 356Q503 350 500 290Q501 262 516 242ZM525 262L540 268L560 268M524 266Q530 282 520 290Q530 301 520 314L526 330M538 268L536 286L543 301L535 315L540 343M558 268L551 290L560 307L553 322L559 339M602 282Q626 282 640 292M603 284Q602 302 606 309L596 333L599 352M625 286L618 305L626 320L617 338L619 354M570 280Q564 291 574 292Q585 291 580 283ZM592 280Q583 289 591 294Q601 290 592 280M575 304Q584 297 588 309Q590 322 575 324Q559 318 575 304M566 278Q578 272 592 281',
      'M638 60L890 100M575 104L894 155M575 104L566 156L776 191M638 60L620 164M690 69L673 173M753 24L717 236M804 33L768 245L717 236M847 98L840 151M762 0L753 24L804 33L810 0M754 101L766 103M763 105L759 119Q751 125 755 112M602 125Q586 122 585 136Q592 148 602 125L602 143M855 136L858 119Q869 116 870 137Q878 116 886 125L885 136M810 255Q825 245 870 240M853 269Q827 286 810 355M808 265Q803 330 820 358Q840 367 894 355M831 270L832 270M894 275Q843 275 847 304Q853 342 894 341M854 397L871 384L884 401L866 413ZM791 465L814 443L848 463L829 495L796 479ZM825 443Q829 430 841 431Q852 440 843 456M879 438L894 430M881 442L894 460',
      'M714 347Q670 347 667 393Q675 436 714 440M745 430L750 428M756 414L757 414M757 390L757 391M752 370L753 370M736 354L737 354M709 402Q712 384 739 376Q730 390 717 404ZM507 497L472 505Q426 503 427 466Q430 427 470 427Q510 435 512 483M509 462L603 455Q624 456 620 469Q617 480 604 480L513 494ZM530 460L531 398Q542 384 556 397L553 458M538 468L538 480M533 474L544 474M527 492L523 550Q530 582 558 584Q594 582 595 545Q586 508 554 511M556 489L556 511L524 515M721 481L738 481L739 495L755 497L754 513L739 514L737 530L722 528L721 515L706 513L707 498L721 497Z',
      'M253 570L292 527Q303 480 302 471Q313 461 328 468Q345 455 367 469L374 480Q390 482 405 492Q415 514 402 565Q365 645 320 669Q256 635 253 570M317 536Q318 510 343 506Q373 514 370 543Q345 570 317 536M413 622L520 657M428 595Q435 584 488 587M459 583Q425 633 445 686M474 587Q438 627 474 687M518 634Q480 629 480 676M510 604Q482 605 456 599M615 600Q607 556 650 549Q691 544 717 576L683 585L676 569Q674 610 635 617L648 630L690 610M712 600Q725 603 720 610M615 600Q620 650 648 670Q660 692 680 690M643 642L653 690M803 610Q776 592 776 575Q783 560 803 577Q828 556 831 575Q828 596 803 610',
      'M0 558Q70 570 93 628L111 620Q123 632 113 646L85 655M98 631L75 655Q75 663 101 637M0 565Q67 580 77 610Q73 627 0 598M27 637L28 637M0 692Q70 692 90 655M0 722Q48 740 50 830M0 805Q32 804 42 830M0 820L30 830M262 784Q258 730 310 700L325 697Q333 685 342 691Q350 696 356 690Q360 679 373 683L389 697Q412 692 418 710Q422 720 418 733Q432 757 427 786Q420 792 300 790Q271 794 262 784M300 789Q297 740 325 714Q370 686 401 713Q420 730 423 760M311 702L280 754M273 782Q275 765 283 760M294 737L302 740M289 748L296 749M289 758L296 755M91 760Q93 731 140 725Q199 723 217 766Q220 785 223 800L219 830M96 740Q140 727 205 757M93 756Q90 780 135 810M100 763L101 763M109 759L110 759M105 770L106 770M205 757Q136 771 134 830M203 757Q182 780 187 830M204 757Q165 780 160 830',
      'M256 830L266 809L275 830M401 830Q428 798 477 794L514 795M486 800Q498 782 530 785Q558 799 553 830M518 797Q488 800 489 828M514 801Q545 800 544 830M590 830L582 760Q580 705 630 690L647 688Q660 705 655 820L648 820L633 695M582 780L640 770M658 825L698 757M660 740L680 740M650 690L660 740M703 800L718 770Q731 763 740 768L748 795L703 804L700 830M740 768L745 780M780 770L794 830M786 765Q815 750 865 762Q877 780 882 830M786 815L875 795M853 653L894 653L894 693L853 693Z'
    ]
  }
]

const triples = a => a.reduce((r, _, i) => (i % 3 ? r : [...r, a.slice(i, i + 3)]), [])
const pairs = a => a.reduce((r, _, i) => (i % 2 ? r : [...r, a.slice(i, i + 2)]), [])
</script>

<template>
  <div class="app">
    <header class="top"></header>
    <main class="chat">
      <svg class="wall" width="1327" height="826" viewBox="1 11 1327 826" aria-hidden="true">
        <defs>
          <path id="spark" d="M0 -25Q7 -5 26 1Q5 7 1 25Q-7 6 -26 0Q-7 -5 0 -25Z" />
          <path id="cross" d="M-14 -21Q-7 -24 -2 -10Q12 -27 19 -18Q25 -13 10 -1Q28 8 24 18Q17 26 2 11Q-12 27 -20 20Q-29 13 -11 2Q-27 -10 -23 -18Q-20 -22 -14 -21Z" />
          <g id="doodles">
            <g v-for="(s, i) in sheets" :key="i" :transform="`translate(${s.x} ${s.y}) scale(.33333)`">
              <circle v-for="(c, j) in triples(s.dots)" :key="'c' + j" :cx="c[0]" :cy="c[1]" :r="c[2]" />
              <use v-for="(p, j) in pairs(s.sparks)" :key="'s' + j" href="#spark" :x="p[0]" :y="p[1]" />
              <use v-for="(p, j) in pairs(s.crosses)" :key="'x' + j" href="#cross" :x="p[0]" :y="p[1]" />
              <path v-for="(d, j) in s.paths" :key="'p' + j" :d="d" />
            </g>
          </g>
          <clipPath id="tile"><rect x="755" y="0" width="550" height="858" /></clipPath>
          <g id="column" clip-path="url(#tile)">
            <use href="#doodles" />
            <use href="#doodles" x="550" />
          </g>
        </defs>
        <g class="ink">
          <use href="#column" x="-1100" />
          <use href="#column" x="-550" />
          <use href="#column" />
          <use href="#column" x="550" />
        </g>
      </svg>

      <svg class="defs" width="0" height="0" aria-hidden="true">
        <symbol id="house" viewBox="0 0 20 20">
          <path d="M2.6 9L6.5 3.5L17.8 9.5V18H2.6Z" fill="#dccfb8" />
          <path d="M2.6 9L6.2 4L9.6 9V18H2.6Z" fill="#c2ad87" />
          <path d="M14 1.5H16.5V6H14Z" fill="#b99d78" />
          <path d="M6 1.5H14.5L19.6 9.4L18.4 10.6H9.6L5.9 4.6L1.6 10.3L.3 9.1Z" fill="#8f163f" />
          <path d="M6.6 2.1H13.9L18.2 9H10.4Z" fill="#a91d4c" />
          <path d="M1.2 9.2L6.2 2.6" stroke="#d0527a" stroke-width=".7" />
          <path d="M4.4 11H8.2V18H4.4Z" fill="#7b4a1c" /><path d="M5.2 11.8H7.4V17.5H5.2Z" fill="#a2682b" />
          <path d="M11 11H16.2V15.8H11Z" fill="#f4f8fa" /><path d="M11.7 11.6H15.5V15.1H11.7Z" fill="#53b9e3" />
          <path d="M13.6 11.4V15.4" stroke="#e6f4fa" stroke-width=".6" />
          <path d="M0 17Q1.5 14 3.3 16.5V18.8H0ZM16.4 17Q18 14 19.8 17V18.8H16.4Z" fill="#69b03b" />
          <path d="M3.3 18H16.5V18.9H3.3Z" fill="#a59a84" />
        </symbol>
        <symbol id="bag" viewBox="0 0 20 20">
          <path d="M7 1Q9 2 10 .3L13.5 1L12.7 5H7.5Z" fill="#b27b3a" />
          <path d="M7.6 5.2H12.7Q18.2 10 17.8 15.6Q17.4 19.6 10 19.6Q2.5 19.6 2.2 15.6Q1.8 10 7.6 5.2Z" fill="#ad733a" />
          <path d="M8 6.3H12Q16.3 10 16 14.6Q15 18 9.4 18Q3.6 17.6 3.7 13.6Q4.2 9 8 6.3Z" fill="#cb9654" />
          <path d="M7 5H13" stroke="#e6cb84" stroke-width="1.4" />
          <path d="M12.2 10Q10 8.9 8.2 10.2Q7.4 11.9 10 12.5Q12.8 13.1 12.2 15Q10.2 16.6 8 15.3M10.2 8.2V17" fill="none" stroke="#4c371b" stroke-width="1.2" />
        </symbol>
        <symbol id="shower" viewBox="0 0 20 20">
          <path d="M17.3 6Q20 2 18.5 .9Q16.8 .4 13.8 3" fill="none" stroke="#6b747c" stroke-width="1.6" />
          <path d="M7.5 6.2Q8.6 2 13 2.2Q18.2 4 17.8 8Q17.6 11.5 15 13Z" fill="#59636c" />
          <path d="M7 5.7L8.6 5.1L16.4 12L15 13.5Z" fill="#98a4ac" />
          <path d="M12.5 3.3Q15.5 4.5 15.5 7" fill="none" stroke="#b5bfc5" stroke-width="1.4" />
          <path d="M7 7.5L1 13M8.5 9L1.8 16.5M10.2 10.5L4 18.8M12 12L8 18.5M13.4 13.5L11.5 17.3" stroke="#86c8ec" stroke-width="1.2" stroke-dasharray="3.6 .8" />
          <path d="M7.8 8.2L2.8 11.8M9.5 9.8L4 14.8M11 11.3L6 18" stroke="#c3e7f8" stroke-width="1" />
        </symbol>
        <symbol id="pin" viewBox="0 0 20 20">
          <path d="M10.4 10V19.3" stroke="#8295a5" stroke-width="1.5" />
          <circle cx="10.5" cy="5.8" r="5.1" fill="#d90b35" /><circle cx="10.1" cy="5.2" r="4" fill="#ee1c45" />
          <ellipse cx="8.7" cy="3.6" rx="1.5" ry="1.1" fill="#ff8296" />
        </symbol>
        <symbol id="chain" viewBox="0 0 20 20">
          <g fill="none">
            <g stroke="#858585" stroke-width="2.8"><rect x="8" y="3.3" width="11.4" height="6.8" rx="3.4" transform="rotate(-45 13.7 6.7)" /><rect x=".6" y="9.9" width="11.4" height="6.8" rx="3.4" transform="rotate(-45 6.3 13.3)" /></g>
            <g stroke="#cfcfcd" stroke-width="1.6"><rect x="8" y="3.3" width="11.4" height="6.8" rx="3.4" transform="rotate(-45 13.7 6.7)" /><rect x=".6" y="9.9" width="11.4" height="6.8" rx="3.4" transform="rotate(-45 6.3 13.3)" /></g>
          </g>
        </symbol>
      </svg>

      <section v-for="(b, i) in bubbles" :key="i" class="bubble" :class="b.cls">
        <svg v-if="i < 2" class="tail" width="9" height="12" viewBox="0 0 9 12"><path d="M1.5 0H9V12L.6 2.2Q-.5 .3 1.5 0Z" fill="#fff" /></svg>
        <div v-for="(l, j) in b.lines" :key="j" class="line">
          <template v-for="(s, k) in l" :key="k">
            <svg v-if="s.icon" class="emoji" width="20" height="20" :style="{ marginLeft: (s.lead || 0) + 'px', marginRight: s.gap + 'px' }"><use :href="'#' + s.icon" /></svg>
            <a v-else-if="s.link" :class="s.link" :style="{ marginLeft: (s.lead || 0) + 'px' }"><FitText :seg="s" /></a>
            <FitText v-else :seg="s" />
          </template>
        </div>
        <span class="time"><FitText :seg="{ s: b.time, w: 60 }" /></span>
      </section>

      <section class="bubble sent">
        <svg class="tail right" width="9" height="12" viewBox="0 0 9 12"><path d="M7.5 0H0V12L8.4 2.2Q9.5 .3 7.5 0Z" fill="#d9fdd3" /></svg>
        <FitText :seg="{ s: '1412', w: 37.5 }" />
        <span class="meta">
          <FitText :seg="{ s: '11:55 p. m.', w: 60 }" />
          <svg width="15" height="10" viewBox="0 0 15 10" fill="none" stroke="#6c8269" stroke-width="1.3"><path d="M.5 5.3L3.7 8.5L10 .8M6.2 7.3L7.6 8.5L14.2 .8" /></svg>
        </span>
      </section>

      <button class="down" aria-label="Bajar">
        <svg width="20" height="22" viewBox="0 0 20 22" fill="none" stroke="#161616" stroke-width="1.3"><path d="M10 1V20.5M.8 11.3L10 20.5L19.2 11.3" /></svg>
      </button>
      <i class="thumb"></i>
    </main>
    <footer class="bottom"><i class="peek"></i></footer>
  </div>
</template>

<style>
body { overflow: hidden; background: #fff; }
</style>

<style scoped>
.app {
  width: 1328px;
  height: 858px;
  box-sizing: border-box;
  display: flex;
  flex-direction: column;
  border-left: 1px solid #e8e7e7;
  background: #fefefe;
  font: 17px "Noto Sans", "Open Sans", sans-serif;
  color: #1b1c1d;
  overflow: hidden;
}
.top { height: 10px; flex: none; border-bottom: 1px solid #e7e5e4; }
.chat {
  position: relative;
  flex: none;
  height: 826px;
  box-sizing: border-box;
  padding: 6px 0 0 40px;
  overflow: hidden;
  background: #faf6f3;
  border-left: 1px solid #f7f5f4;
}
.wall { position: absolute; left: -1px; top: 0; }
.defs { position: absolute; }
.ink { fill: none; stroke: #ece7e4; stroke-width: 3.8; stroke-linecap: round; stroke-linejoin: round; }
.bubble {
  position: relative;
  box-sizing: border-box;
  background: #fff;
  border-radius: 7px;
  box-shadow: 0 1px 2px rgba(40, 30, 20, .12), 0 1px 4px rgba(40, 30, 20, .05);
  padding: 8.4px 10px 0;
}
.first { width: 706px; height: 62px; margin-bottom: 69px; border-top-left-radius: 0; }
.second { width: 697px; height: 322px; margin-bottom: 4px; padding-top: 7px; border-top-left-radius: 0; }
.third { width: 713px; height: 374px; padding-top: 8.6px; }
.line { height: 23.75px; display: flex; }
.third .line { height: 23.72px; }
.emoji { flex: none; margin-top: 1px; }
.blue { color: #063e91; }
.green { color: #1b8755; }
.tail { position: absolute; left: -8px; top: 0; }
.tail.right { left: auto; right: -8px; }
.time { position: absolute; right: 7px; bottom: 2px; font-size: 12.5px; color: #858585; }
.second .time { right: 8px; }
.third .time { right: 8px; bottom: 5px; }
.sent {
  position: absolute;
  left: 1116px;
  top: 84px;
  width: 180px;
  height: 37px;
  display: flex;
  justify-content: space-between;
  padding: 7px 12px 0 10px;
  background: #d9fdd3;
  border-top-right-radius: 0;
  box-shadow: 0 1px 1px rgba(40, 90, 30, .25), 0 1px 4px rgba(40, 30, 20, .08);
}
.meta { display: flex; gap: 7px; font-size: 12.5px; color: #718a6e; margin-top: 4px; }
.meta > svg:last-child { margin-top: 8.5px; }
.down {
  position: absolute;
  left: 1254px;
  top: 752px;
  width: 50px;
  height: 52px;
  padding: 0 1px 1px 0;
  border: 0;
  border-radius: 9px;
  background: #f6f3f2;
  box-shadow: 0 1px 8px rgba(0, 0, 0, .22);
  display: grid;
  place-items: center;
}
.thumb { position: absolute; right: 4px; top: 765px; width: 3px; height: 30px; border-radius: 2px; background: #8b8a89; }
.bottom { flex: 1; border-top: 1px solid #e7e5e4; position: relative; overflow: hidden; }
.peek { position: absolute; left: 29px; top: 18.5px; width: 14px; height: 14px; border: 1.5px solid #222; border-radius: 50%; box-sizing: border-box; }
</style>
